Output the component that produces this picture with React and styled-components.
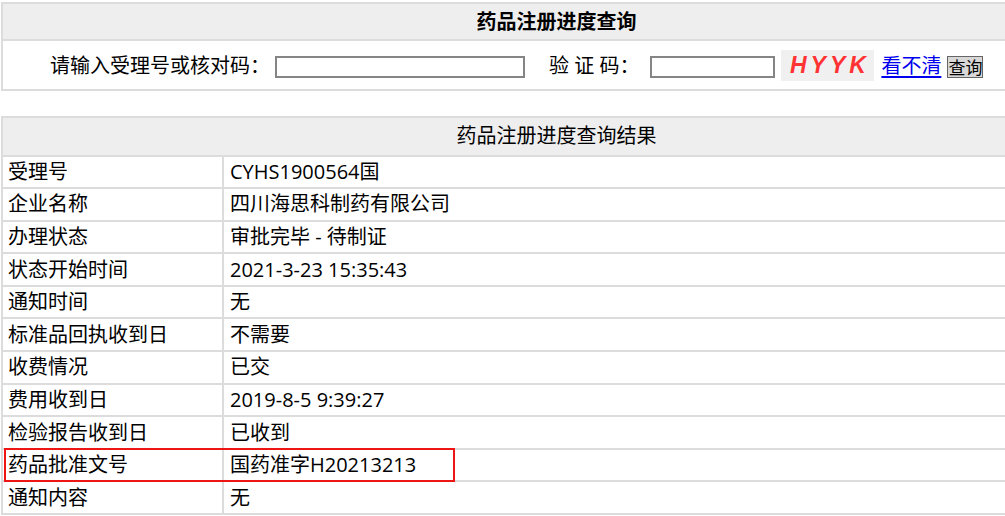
import React from "react";
import styled, { createGlobalStyle } from "styled-components";

const GlobalStyle = createGlobalStyle`
  html, body {
    margin: 0;
    padding: 0;
    background: #ffffff;
    overflow: hidden;
  }
  body {
    font-family: "Open Sans", "Noto Sans CJK SC", sans-serif;
    color: #000;
  }
  * { box-sizing: border-box; }
`;

const Page = styled.div`
  padding: 2px 0 0 1px;
  width: 1120px;
`;

const Panel = styled.div`
  width: 1111px;
  border: 2px solid #dcdcdc;
  border-bottom: none;
  margin-bottom: ${(p) => p.$gap || 0}px;
`;

const PanelHeader = styled.div`
  height: ${(p) => p.$h}px;
  background: #eeeeee;
  border-bottom: 2px solid #dcdcdc;
  display: flex;
  align-items: center;
  justify-content: center;
  font-size: 20px;
  font-weight: ${(p) => (p.$bold ? 700 : 400)};
  line-height: 1;
`;

const SearchRow = styled.div`
  height: 50px;
  border-bottom: 2px solid #dcdcdc;
  display: flex;
  align-items: center;
  padding-left: 47px;
  padding-top: 1px;
  font-size: 20px;
  line-height: 1;
`;

const Label = styled.span`
  margin-left: ${(p) => p.$ml || 0}px;
  white-space: pre;
`;

const Input = styled.input`
  width: ${(p) => p.$w}px;
  height: 22px;
  margin: 2px 0 0 ${(p) => p.$ml}px;
  border: 2px solid #858585;
  border-radius: 0;
  padding: 0 2px;
  background: #fff;
  outline: none;
`;

const Captcha = styled.div`
  width: 93px;
  height: 31px;
  margin-left: 6px;
  background: #f0f0f0;
  display: flex;
  align-items: center;
  justify-content: center;
  color: #ff3333;
  font-family: "Liberation Sans", Arial, sans-serif;
  font-style: italic;
  font-weight: 700;
  font-size: 23px;
  letter-spacing: 4px;
  padding-left: 4px;
`;

const RefreshLink = styled.a`
  margin-left: 7px;
  color: #0000ee;
  text-decoration: underline;
  text-underline-offset: 3px;
  font-size: 20px;
  cursor: pointer;
`;

const QueryButton = styled.button`
  width: 36px;
  height: 22px;
  margin: 2px 0 0 6px;
  padding: 0;
  border: 1px solid #666;
  background: #d8d8d8;
  font-family: "Noto Sans CJK SC", sans-serif;
  font-size: 17px;
  line-height: 1;
  color: #000;
  display: flex;
  align-items: center;
  justify-content: center;
`;

const Row = styled.div`
  position: relative;
  display: grid;
  grid-template-columns: 221px 1fr;
  height: 32.6px;
  border-bottom: 2px solid #dcdcdc;
  font-size: 20px;
  line-height: 1;
`;

const Cell = styled.div`
  display: flex;
  align-items: center;
  padding-left: ${(p) => p.$pl}px;
  border-right: ${(p) => (p.$divider ? "2px solid #dcdcdc" : "none")};
  white-space: nowrap;
`;

const Highlight = styled.div`
  position: absolute;
  left: 1px;
  top: -2px;
  width: 451px;
  height: 34px;
  border: 2px solid #ee1515;
  pointer-events: none;
`;

const rows = [
  ["受理号", "CYHS1900564国"],
  ["企业名称", "四川海思科制药有限公司"],
  ["办理状态", "审批完毕 - 待制证"],
  ["状态开始时间", "2021-3-23 15:35:43"],
  ["通知时间", "无"],
  ["标准品回执收到日", "不需要"],
  ["收费情况", "已交"],
  ["费用收到日", "2019-8-5 9:39:27"],
  ["检验报告收到日", "已收到"],
  ["药品批准文号", "国药准字H20213213", true],
  ["通知内容", "无"],
];

export default function App() {
  return (
    <>
      <GlobalStyle />
      <Page>
        <Panel $gap={25}>
          <PanelHeader $h={37} $bold>药品注册进度查询</PanelHeader>
          <SearchRow>
            <Label>请输入受理号或核对码：</Label>
            <Input $w={250} $ml={5} />
            <Label $ml={24}>验 证 码：</Label>
            <Input $w={125} $ml={11} />
            <Captcha>HYYK</Captcha>
            <RefreshLink>看不清</RefreshLink>
            <QueryButton>查询</QueryButton>
          </SearchRow>
        </Panel>
        <Panel>
          <PanelHeader $h={38.5}>药品注册进度查询结果</PanelHeader>
          {rows.map(([label, value, marked]) => (
            <Row key={label}>
              <Cell $pl={5} $divider>{label}</Cell>
              <Cell $pl={6}>{value}</Cell>
              {marked && <Highlight />}
            </Row>
          ))}
        </Panel>
      </Page>
    </>
  );
}
